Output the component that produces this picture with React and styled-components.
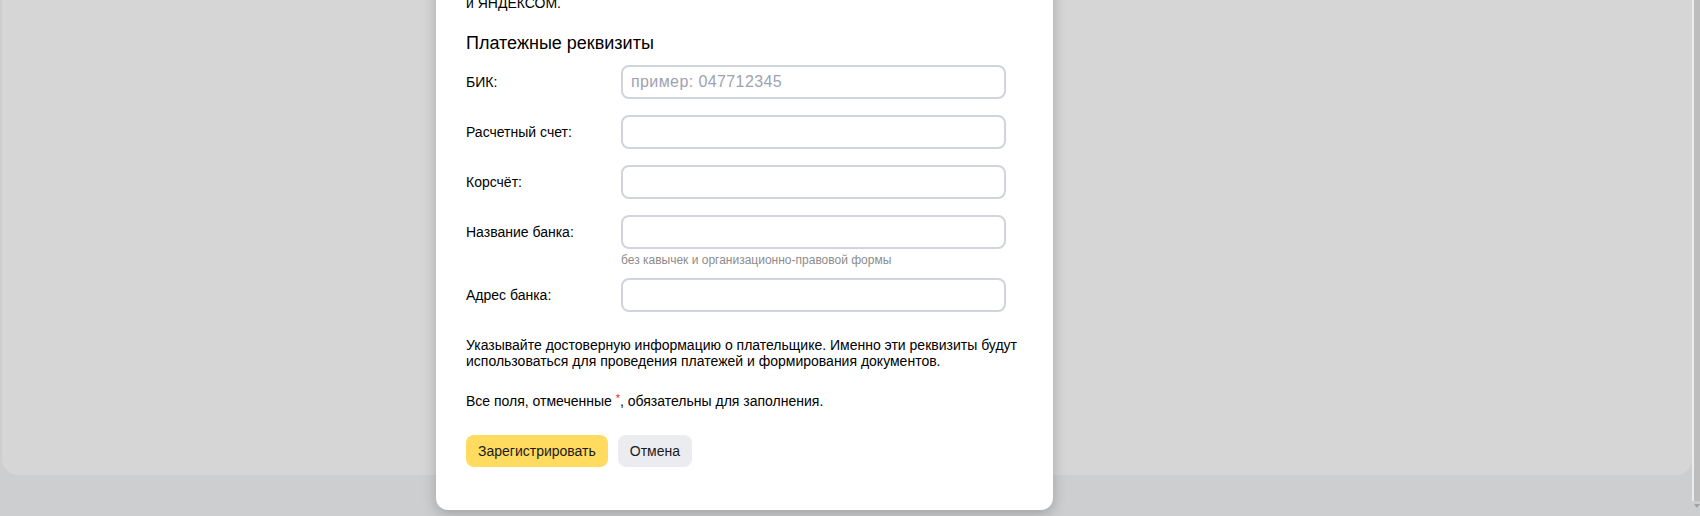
import React from "react";
import styled, { createGlobalStyle } from "styled-components";

const Global = createGlobalStyle`
  html, body { margin: 0; padding: 0; overflow: hidden; }
  body { font-family: "Liberation Sans", Arial, sans-serif; color: #000; }
  * { box-sizing: border-box; }
`;

const Page = styled.div`
  display: flex;
  width: 1700px;
  height: 516px;
  background: #cdced0;
  overflow: hidden;
`;

const Main = styled.div`
  position: relative;
  flex: 1;
  padding-left: 2px;
`;

const BackCard = styled.div`
  height: 475px;
  background: #d6d6d6;
  border-radius: 0 0 16px 16px;
`;

const Scrollbar = styled.div`
  width: 8px;
  display: flex;
  flex-direction: column;
  background: #cdced0;
`;

const ScrollTrack = styled.div`
  display: flex;
  height: 501px;
`;

const ScrollGap = styled.div`
  width: 2px;
  background: #ececec;
`;

const ScrollThumb = styled.div`
  flex: 1;
  background: #bdbdbd;
`;

const ScrollArrow = styled.div`
  margin: 3px 0 0 2px;
  width: 0;
  height: 0;
  border-left: 3px solid transparent;
  border-right: 3px solid transparent;
  border-top: 4px solid #a3a3a3;
`;

const Modal = styled.div`
  position: absolute;
  left: 436px;
  bottom: 6px;
  width: 617px;
  background: #fff;
  border-radius: 12px;
  box-shadow: 0 4px 14px rgba(0, 0, 0, 0.22);
  padding: 0 30px 43px 30px;
`;

const Intro = styled.p`
  margin: 0;
  font-size: 14px;
  line-height: 17px;
`;

const Heading = styled.h2`
  margin: 19px 0 10px;
  font-size: 18px;
  line-height: 24px;
  font-weight: 400;
`;

const Row = styled.div`
  display: grid;
  grid-template-columns: 155px 385px;
  align-items: start;
  margin-bottom: ${(p) => (p.$hint ? "11px" : "16px")};
`;

const Label = styled.label`
  font-size: 14px;
  line-height: 34px;
`;

const Field = styled.div`
  display: flex;
  flex-direction: column;
`;

const Input = styled.input`
  height: 34px;
  width: 100%;
  border: 2px solid #d2d4dc;
  border-radius: 8px;
  padding: 0 8px;
  font-family: inherit;
  font-size: 16px;
  letter-spacing: 0.4px;
  outline: none;
  background: #fff;
  &::placeholder { color: #9ea2b2; }
`;

const Hint = styled.div`
  margin-top: 4px;
  font-size: 12px;
  line-height: 14px;
  color: #8c8c8c;
`;

const Note = styled.p`
  margin: ${(p) => p.$mt || "0"} 0 0;
  font-size: 14px;
  line-height: 16px;
`;

const Star = styled.span`
  color: #e8242a;
  font-size: 11px;
  vertical-align: 4px;
  line-height: 0;
`;

const Buttons = styled.div`
  display: flex;
  gap: 10px;
  margin-top: 26px;
`;

const Button = styled.button`
  height: 32px;
  padding: 0 12px;
  border: none;
  border-radius: 8px;
  font-family: inherit;
  font-size: 14px;
  color: #1a1a1a;
  background: ${(p) => (p.$primary ? "#ffdb60" : "#ebecef")};
  cursor: pointer;
`;

const fields = [
  { label: "БИК:", placeholder: "пример: 047712345" },
  { label: "Расчетный счет:" },
  { label: "Корсчёт:" },
  { label: "Название банка:", hint: "без кавычек и организационно-правовой формы" },
  { label: "Адрес банка:" },
];

export default function App() {
  return (
    <>
      <Global />
      <Page>
        <Main>
          <BackCard />
          <Modal>
            <Intro>
              Нажимая кнопку «Зарегистрировать», вы принимаете условия договора между вами
              <br />и ЯНДЕКСОМ.
            </Intro>
            <Heading>Платежные реквизиты</Heading>
            {fields.map((f) => (
              <Row key={f.label} $hint={!!f.hint}>
                <Label>{f.label}</Label>
                <Field>
                  <Input placeholder={f.placeholder || ""} />
                  {f.hint && <Hint>{f.hint}</Hint>}
                </Field>
              </Row>
            ))}
            <Note $mt="25px">
              Указывайте достоверную информацию о плательщике. Именно эти реквизиты будут
              использоваться для проведения платежей и формирования документов.
            </Note>
            <Note $mt="24px">
              Все поля, отмеченные <Star>*</Star>, обязательны для заполнения.
            </Note>
            <Buttons>
              <Button $primary>Зарегистрировать</Button>
              <Button>Отмена</Button>
            </Buttons>
          </Modal>
        </Main>
        <Scrollbar>
          <ScrollTrack>
            <ScrollGap />
            <ScrollThumb />
          </ScrollTrack>
          <ScrollArrow />
        </Scrollbar>
      </Page>
    </>
  );
}
